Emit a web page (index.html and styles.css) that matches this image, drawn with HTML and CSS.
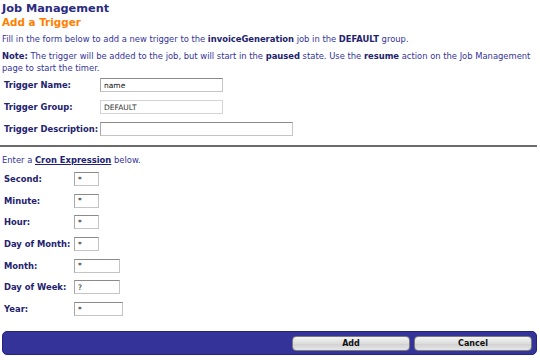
FILE: index.html
```html
<!DOCTYPE html>
<html>
<head>
<meta charset="utf-8">
<link rel="stylesheet" href="styles.css">
</head>
<body>
<div class="page">
  <h1 class="title">Job Management</h1>
  <h2 class="subtitle">Add a Trigger</h2>
  <p class="intro">Fill in the form below to add a new trigger to the <b>invoiceGeneration</b> job in the <b>DEFAULT</b> group.</p>
  <p class="note"><b>Note:</b> The trigger will be added to the job, but will start in the <b>paused</b> state. Use the <b>resume</b> action on the Job Management page to start the timer.</p>
  <div class="form top-form">
    <label class="lbl">Trigger Name:</label><div class="field"><input class="inp w122" value="name"></div>
    <label class="lbl">Trigger Group:</label><div class="field"><input class="inp w122 light" value="DEFAULT"></div>
    <label class="lbl">Trigger Description:</label><div class="field"><input class="inp w192" value=""></div>
  </div>
  <hr class="rule">
  <p class="cron-intro">Enter a <a class="link" href="#">Cron Expression</a> below.</p>
  <div class="form cron-form">
    <label class="lbl">Second:</label><div class="field"><input class="inp w24" value="*"></div>
    <label class="lbl">Minute:</label><div class="field"><input class="inp w24" value="*"></div>
    <label class="lbl">Hour:</label><div class="field"><input class="inp w24" value="*"></div>
    <label class="lbl">Day of Month:</label><div class="field"><input class="inp w24" value="*"></div>
    <label class="lbl">Month:</label><div class="field"><input class="inp w45" value="*"></div>
    <label class="lbl">Day of Week:</label><div class="field"><input class="inp w45" value="?"></div>
    <label class="lbl">Year:</label><div class="field"><input class="inp w48" value="*"></div>
  </div>
  <div class="bar">
    <button class="btn">Add</button>
    <button class="btn">Cancel</button>
  </div>
</div>
</body>
</html>
```
FILE: styles.css
```css
html, body {
  margin: 0;
  padding: 0;
  background: #ffffff;
}
body {
  font-family: "DejaVu Sans", Verdana, sans-serif;
  color: #333399;
  font-size: 8.4px;
}
.page {
  padding: 2px 3px 0 2px;
}
.title {
  margin: 0;
  font-size: 11.3px;
  line-height: 14px;
  font-weight: bold;
  color: #2b2b80;
}
.subtitle {
  margin: 0;
  font-size: 10.4px;
  line-height: 13px;
  font-weight: bold;
  color: #ff8000;
}
.intro {
  margin: 4px 0 0 0;
  line-height: 12px;
}
.note {
  margin: 5px 0 0 0;
  line-height: 12px;
  padding-right: 4px;
}
b {
  color: #22226e;
  line-height: 10px;
}
.form {
  display: grid;
  align-items: center;
}
.top-form {
  grid-template-columns: 98px auto;
  margin-top: 4px;
  row-gap: 8px;
}
.cron-form {
  grid-template-columns: 72px auto;
  margin-top: 6px;
  row-gap: 7.7px;
}
.lbl {
  font-weight: bold;
  color: #22226e;
  padding-left: 2px;
  line-height: 12px;
  white-space: nowrap;
}
.field {
  display: flex;
}
.inp {
  box-sizing: border-box;
  height: 14px;
  border: 1px solid #c4c4c4;
  border-top-color: #8a8a8a;
  border-left-color: #a8a8a8;
  padding: 0 3px;
  font-family: "DejaVu Sans", Verdana, sans-serif;
  font-size: 7.5px;
  color: #111111;
  background: #ffffff;
  margin: 0;
  outline: none;
}
.inp.light {
  border-color: #d4d4d4;
  color: #333333;
}
.w122 { width: 123px; }
.w192 { width: 193px; }
.w24 { width: 25px; }
.w45 { width: 46px; }
.w48 { width: 49px; }
.rule {
  margin: 9px 0 0 -2px;
  height: 0;
  border: 0;
  border-top: 2px solid #6b6b6b;
  width: 537px;
}
.cron-intro {
  margin: 7px 0 0 0;
  line-height: 12px;
}
.link {
  color: #22226e;
  font-weight: bold;
  text-decoration: underline;
}
.bar {
  margin-top: 15px;
  height: 24px;
  width: 535px;
  box-sizing: border-box;
  background: #333399;
  border: 1px solid #24247a;
  border-radius: 5px;
  display: flex;
  justify-content: flex-end;
  align-items: center;
  gap: 4px;
  padding-right: 4px;
}
.btn {
  width: 118px;
  height: 15px;
  box-sizing: border-box;
  border: 1px solid #7a7a7a;
  border-radius: 4px;
  background: linear-gradient(#f4f4f4, #dcdcdc 50%, #cfcfcf 51%, #e6e6e6);
  font-family: "DejaVu Sans", Verdana, sans-serif;
  font-size: 8px;
  font-weight: bold;
  color: #111111;
  padding: 0;
  line-height: 13px;
}
```
